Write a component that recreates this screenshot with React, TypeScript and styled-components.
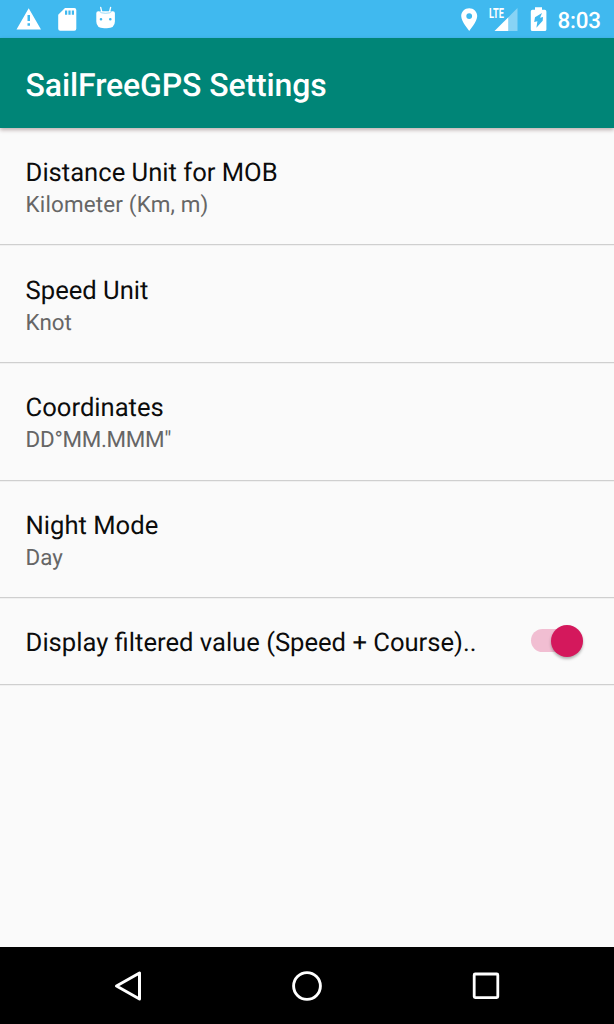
import React from "react";
import styled, { createGlobalStyle } from "styled-components";

const GlobalStyle = createGlobalStyle`
  * { box-sizing: border-box; }
  body {
    margin: 0;
    background: #fafafa;
    font-family: Roboto, sans-serif;
    text-rendering: geometricPrecision;
  }
`;

const Screen = styled.div`
  width: 614px;
  height: 1024px;
  display: flex;
  flex-direction: column;
  overflow: hidden;
  background: #fafafa;
`;

const StatusBar = styled.div`
  flex: none;
  height: 38px;
  display: flex;
  justify-content: space-between;
  background: #40b9ef;
  color: #fff;
`;

const StatusGroup = styled.div`
  display: flex;
  svg { display: block; }
`;

const Clock = styled.span`
  width: 56.5px;
  font-size: 22.4px;
  font-weight: 500;
  line-height: 42px;
  letter-spacing: -0.2px;
  white-space: nowrap;
`;

const AppBar = styled.header`
  flex: none;
  height: 90px;
  padding: 1px 26px 0 25.6px;
  display: flex;
  align-items: center;
  background: #008577;
  color: #fff;
  z-index: 1;
  box-shadow: 0 2px 4px rgba(60, 20, 20, 0.32);
`;

const Title = styled.h1`
  margin: 0;
  padding-top: 3px;
  font-size: 32px;
  line-height: 38px;
  font-weight: 500;
  letter-spacing: -0.12px;
  white-space: nowrap;
`;

const List = styled.main`
  flex: 1;
`;

const Row = styled.div<{ $height: number }>`
  height: ${(p) => p.$height}px;
  padding: 2px 25.6px 0;
  display: flex;
  align-items: center;
  justify-content: space-between;
  border-bottom: 1px solid #cfcfcf;
  box-shadow: 0 1px #f0f0f0;
`;

const RowText = styled.div<{ $lead?: number }>`
  padding-top: ${(p) => p.$lead ?? 2}px;
`;

const Label = styled.div`
  font-size: 25.6px;
  line-height: 32px;
  color: #0c0c0c;
  white-space: nowrap;
`;

const Summary = styled.div<{ $tracking?: number }>`
  font-size: 22.4px;
  line-height: 32px;
  letter-spacing: ${(p) => p.$tracking ?? 0}px;
  color: #666;
  white-space: nowrap;
`;

const Switch = styled.button`
  width: 57px;
  height: 32px;
  margin: 0 5px 3px 0;
  padding: 0;
  border: 0;
  display: flex;
  align-items: center;
  justify-content: flex-end;
  background: transparent;
`;

const Track = styled.span`
  width: 46px;
  height: 22.5px;
  margin-right: -26px;
  border-radius: 12px;
  background: #f1bed2;
`;

const Thumb = styled.span`
  width: 32px;
  height: 32px;
  border-radius: 50%;
  background: #d4185c;
  box-shadow: 0 2px 3px rgba(0, 0, 0, 0.3);
`;

const NavBar = styled.nav`
  flex: none;
  height: 77px;
  display: flex;
  justify-content: center;
  background: #000;
`;

const NavButton = styled.button`
  width: 179px;
  padding: 0;
  border: 0;
  display: flex;
  align-items: center;
  justify-content: center;
  background: transparent;
`;

const settings = [
  { label: "Distance Unit for MOB", summary: "Kilometer (Km, m)", height: 117, lead: 4, tracking: 0.17 },
  { label: "Speed Unit", summary: "Knot", height: 118, lead: 4 },
  { label: "Coordinates", summary: 'DD°MM.MMM"', height: 118, lead: 3, tracking: -0.3 },
  { label: "Night Mode", summary: "Day", height: 117, lead: 4 },
];

const NoticeIcons = () => (
  <svg width="130" height="38" viewBox="0 0 130 38" fill="#fff">
    <path fillRule="evenodd" d="M28.7 8.3 41 29.5H16.5ZM27.5 15v6h2.5v-6Zm0 8.3v2.5H30v-2.5Z" />
    <path fillRule="evenodd" d="M65 8h9.300q2 0 2 2v18.700q0 2-2 2H60.200q-2 0-2-2V14.800ZM65 10.400v4.300h2.200v-4.300Zm3.400 0v4.300h2.200v-4.300Zm3.400 0v4.300H74v-4.300Z" />
    <path d="m100.700 7.500 1.200 5M110.600 7.500l-1.200 5" stroke="#fff" strokeWidth="1.300" strokeLinecap="round" />
    <path fillRule="evenodd" d="M96.300 13.300q0-2 2-2h14.600q2 0 2 2v8.200q0 6.700-8 6.700h-2.600q-8 0-8-6.700ZM101 18a1.300 1.300 0 1 0 0 2.600 1.300 1.300 0 0 0 0-2.600Zm9.300 0a1.300 1.300 0 1 0 0 2.600 1.300 1.300 0 0 0 0-2.600Z" />
    <path d="M99.500 11.500q1.300 1.800 6.100 1.800t6.100-1.800" fill="none" stroke="#40b9ef" strokeOpacity=".5" strokeWidth="1" />
  </svg>
);

const SystemIcons = () => (
  <svg width="107.5" height="38" viewBox="450 0 107.5 38" fill="#fff">
    <path fillRule="evenodd" d="M469.200 8.200c-4.500 0-8 3.500-8 7.900 0 5.700 8 14.800 8 14.800s8-9.100 8-14.800c0-4.400-3.500-7.900-8-7.900Zm0 5a2.900 2.900 0 1 1 0 5.800 2.900 2.900 0 0 1 0-5.800Z" />
    <text x="489" y="18.300" fontFamily="Roboto, sans-serif" fontSize="14" fontWeight="700" textLength="14.800" lengthAdjust="spacingAndGlyphs">LTE</text>
    <path d="M517.500 8v23H508.300V17.200Z" opacity=".38" />
    <path d="M508.300 17.200V31H494.500Z" />
    <path fillRule="evenodd" d="M535 7.300h7v2.400h2.700q1.700 0 1.700 1.700v18q0 1.600-1.700 1.600h-12.300q-1.600 0-1.600-1.600v-18q0-1.700 1.600-1.700H535ZM542 13l-7 4.200-.8 4.900 3.200-.8-1 6.500 6.300-7 .3-3.700-2.900.7Z" />
  </svg>
);

export default function App() {
  return (
    <>
      <GlobalStyle />
      <Screen>
        <StatusBar>
          <StatusGroup><NoticeIcons /></StatusGroup>
          <StatusGroup><SystemIcons /><Clock>8:03</Clock></StatusGroup>
        </StatusBar>
        <AppBar><Title>SailFreeGPS Settings</Title></AppBar>
        <List>
          {settings.map((s) => (
            <Row key={s.label} $height={s.height}>
              <RowText $lead={s.lead}>
                <Label>{s.label}</Label>
                <Summary $tracking={s.tracking}>{s.summary}</Summary>
              </RowText>
            </Row>
          ))}
          <Row $height={87}>
            <RowText>
              <Label>Display filtered value (Speed + Course)..</Label>
            </RowText>
            <Switch role="switch" aria-checked="true"><Track /><Thumb /></Switch>
          </Row>
        </List>
        <NavBar>
          <NavButton aria-label="Back">
            <svg width="30" height="34" viewBox="0 0 30 34" fill="none" stroke="#fff" strokeWidth="3" strokeLinejoin="round">
              <path d="M26.500 4v26L3.500 17Z" />
            </svg>
          </NavButton>
          <NavButton aria-label="Home">
            <svg width="34" height="34" viewBox="0 0 34 34" fill="none" stroke="#fff" strokeWidth="2.900">
              <circle cx="17" cy="17" r="13.400" />
            </svg>
          </NavButton>
          <NavButton aria-label="Recent apps">
            <svg width="34" height="34" viewBox="0 0 34 34" fill="none" stroke="#fff" strokeWidth="2.800">
              <rect x="5.200" y="5" width="23.600" height="23.600" rx="1" />
            </svg>
          </NavButton>
        </NavBar>
      </Screen>
    </>
  );
}
